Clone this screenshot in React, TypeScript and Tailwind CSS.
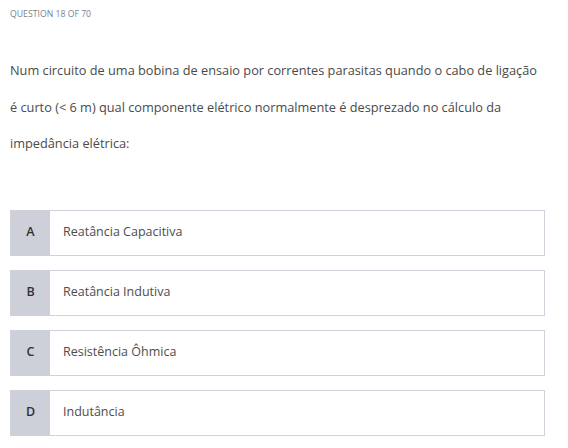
const options = [
  { letter: 'A', text: 'Reatância Capacitiva' },
  { letter: 'B', text: 'Reatância Indutiva' },
  { letter: 'C', text: 'Resistência Ôhmica' },
  { letter: 'D', text: 'Indutância' },
]

export default function App() {
  return (
    <div className="min-h-[448px] w-[568px] bg-white px-[10px] pt-[9px] font-['Open_Sans',sans-serif] text-[#4d4d4d]">
      <div className="text-[8.7px] leading-[10px] uppercase text-[#7b7f8c]">Question 18 of 70</div>

      <p className="mt-[33px] w-[535px] text-[12.75px] leading-[36.5px] text-[#4a4a4a]">
        Num circuito de uma bobina de ensaio por correntes parasitas quando o cabo de ligação é curto (&lt; 6 m) qual
        componente elétrico normalmente é desprezado no cálculo da impedância elétrica:
      </p>

      <div className="mt-[48px] flex w-[535px] flex-col gap-[14px]">
        {options.map((o) => (
          <div key={o.letter} className="flex h-[46px] border border-[#d0d1da] bg-white">
            <div className="flex w-[39px] items-center justify-center bg-[#cdd0d9] text-[12.5px] font-semibold text-[#2f3138]">
              {o.letter}
            </div>
            <div className="flex items-center pl-[13px] text-[12.5px] text-[#4d4d4d]">{o.text}</div>
          </div>
        ))}
      </div>
    </div>
  )
}
